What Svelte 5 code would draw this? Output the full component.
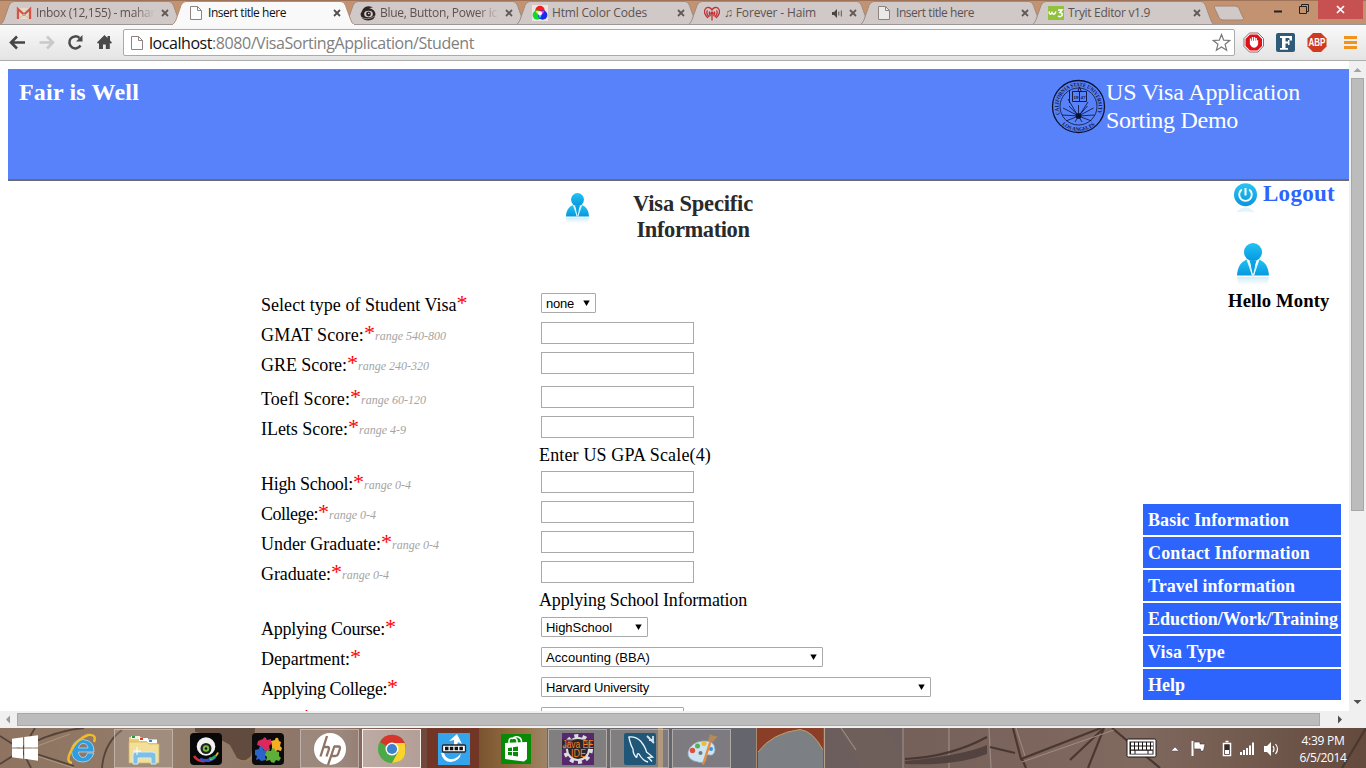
<script>
  const tabs = [
    { icon: 'mail', title: 'Inbox (12,155) - mahar', w: 119, fade: true },
    { icon: 'page', title: 'Insert title here', w: 78, active: true },
    { icon: 'eye', title: 'Blue, Button, Power ic', w: 117, fade: true },
    { icon: 'rgb', title: 'Html Color Codes', w: 95 },
    { icon: 'radio', title: '♫ Forever - Haim', w: 92, audio: true },
    { icon: 'page', title: 'Insert title here', w: 78 },
    { icon: 'w3', title: 'Tryit Editor v1.9', w: 82 }
  ];
  const rows = [
    { label: 'Select type of Student Visa', w: 195.5, select: 'none', tw: 28, width: 55, h: 29 },
    { label: 'GMAT Score:', w: 103, hint: 'range 540-800', hw: 71, h: 30 },
    { label: 'GRE Score:', w: 86, hint: 'range 240-320', hw: 71, h: 34 },
    { label: 'Toefl Score:', w: 89, hint: 'range 60-120', hw: 65, h: 30 },
    { label: 'ILets Score:', w: 87, hint: 'range 4-9', hw: 47, h: 30 },
    { heading: 'Enter US GPA Scale(4)', w: 172, h: 25 },
    { label: 'High School:', w: 92, hint: 'range 0-4', hw: 47, h: 30 },
    { label: 'College:', w: 57, hint: 'range 0-4', hw: 47, h: 30 },
    { label: 'Under Graduate:', w: 120, hint: 'range 0-4', hw: 47, h: 30 },
    { label: 'Graduate:', w: 70, hint: 'range 0-4', hw: 47, h: 30 },
    { heading: 'Applying School Information', w: 208, h: 26 },
    { label: 'Applying Course:', w: 124, select: 'HighSchool', tw: 66, width: 107, h: 30 },
    { label: 'Department:', w: 89, select: 'Accounting (BBA)', tw: 104, width: 282, h: 30 },
    { label: 'Applying College:', w: 126, select: 'Harvard University', tw: 103, width: 390, h: 30 },
    { label: '', w: 40, select: ' ', tw: 4, width: 143, h: 30 }
  ];
  const menu = [
    ['Basic Information', 141],
    ['Contact Information', 162],
    ['Travel information', 147],
    ['Eduction/Work/Training', 190],
    ['Visa Type', 77],
    ['Help', 37]
  ];
  const tasks = [
    { icon: 'ie' },
    { icon: 'files', open: true },
    { icon: 'cam' },
    { icon: 'puzzle' },
    { icon: 'hp', open: true },
    { icon: 'chrome', open: true, front: true },
    { icon: 'pass' },
    { icon: 'store' },
    { icon: 'java', open: true },
    { icon: 'mysql', open: true },
    { icon: 'paint', open: true }
  ];

  // Spreads the letters so that a line takes the given width.
  function fit(node, width) {
    const apply = () => {
      const count = node.textContent.length;
      if (!count) {
        node.style.width = width + 'px';
        return;
      }
      node.style.letterSpacing = '0px';
      const natural = node.getBoundingClientRect().width;
      node.style.letterSpacing = (width - natural) / count + 'px';
    };
    apply();
    document.fonts?.ready.then(apply);
  }
</script>

{#snippet page()}
  <path d="M2.500 1.500h7l4 4v9h-11z" fill="#fff" fill-opacity=".6" stroke="#8d8481" /><path d="M9.500 1.500v4h4" fill="none" stroke="#8d8481" />
{/snippet}

{#snippet person(size)}
  <svg width={size} height={size * 1.32} viewBox="0 0 32 42">
    <defs>
      <linearGradient id="pg" x1="0" y1="0" x2="0" y2="1"><stop offset="0" stop-color="#22c3f3" /><stop offset="1" stop-color="#0597de" /></linearGradient>
      <linearGradient id="pr" x1="0" y1="0" x2="0" y2="1"><stop offset="0" stop-color="#c9eaf9" /><stop offset="1" stop-color="#fff" /></linearGradient>
    </defs>
    <circle cx="16" cy="9" r="9" fill="url(#pg)" />
    <path d="M0 32.500C.5 24 4 18.500 10 16.500l6 14.500 6-14.500c6 2 9.500 7.500 10 16z" fill="url(#pg)" />
    <path d="M12.500 17.500h7l-1.500 5 1 4.500-3 6-3-6 1-4.500z" fill="#0aa2e4" />
    <path d="M10.200 17l5.300 15.500L13.200 22M21.800 17l-5.300 15.500L18.800 22" fill="none" stroke="#fff" stroke-width=".9" />
    <path d="M0 34h14l2-1 2 1h14l-1.500 8h-29z" fill="url(#pr)" />
  </svg>
{/snippet}

<div class="window">
  <div class="strip">
    <div class="tabs">
      {#each tabs as t}
        <div class="tab" class:active={t.active}>
          <svg class="shape" width="184" height="25" viewBox="0 0 184 25">
            <path d="M-1 24.500C2 23.500 3 20 4 17L8 5.500Q9.500 1.500 13 1.500H168Q171 1.500 172.500 5.500L177 18Q179 24 181 24.500z" fill={t.active ? '#f9f9f9' : '#d0c9c7'} stroke={t.active ? '#b58e74' : '#a08b80'} />
            {#if !t.active}<path d="M0 24.500H182" stroke="#9c9797" />{:else}<path d="M0 24.500H181" stroke="#f9f9f9" />{/if}
          </svg>
          <svg class="fav" width="16" height="16" viewBox="0 0 16 16">
            {#if t.icon === 'mail'}
              <path d="M1 3h14v11H1z" fill="#e6d8cb" /><path d="M2 14V4l6 5.500L14 4v10" fill="none" stroke="#d55345" stroke-width="2.300" /><path d="M4 13l4-4 4 4" fill="none" stroke="#c8b8a9" />
            {:else if t.icon === 'page'}
              {@render page()}
            {:else if t.icon === 'eye'}
              <path d="M3 4Q6-.5 13 2.500L9 3q6 1.500 6.500 6Q15 15.500 8 15.500 1 15 .5 9z" fill="#2c2421" /><path d="M1 12q6 4 14-1" fill="none" stroke="#d0c9c7" stroke-width=".6" /><ellipse cx="8.500" cy="9" rx="4.300" ry="3.200" fill="#d8cfcc" /><circle cx="8.500" cy="9" r="2.400" fill="#2c2421" /><circle cx="8.800" cy="8.500" r=".8" fill="#ddd" />
            {:else if t.icon === 'rgb'}
              <path d="M0 0h16v16H0z" fill="#efe5df" /><circle cx="8" cy="5.500" r="4.700" fill="#f31c22" /><circle cx="5.300" cy="10" r="4.700" fill="#13d831" /><circle cx="10.700" cy="10" r="4.700" fill="#1c2be8" /><path d="M3.700 6Q5 5.200 8 6.500L6 9.300Q4 8 3.700 6z" fill="#fbe82a" /><path d="M12.300 6Q10 5.200 8 6.500l2 2.800Q12 8 12.300 6z" fill="#f233e2" /><path d="M8 13.300Q6.300 11 6.500 9.300h3Q9.700 11 8 13.300z" fill="#22d6ee" /><circle cx="8" cy="8.300" r="2.100" fill="#fff" />
            {:else if t.icon === 'radio'}
              <g fill="none" stroke="#c13237" stroke-width="1.300"><path d="M8 15.500V10M4 13Q-1 8 1 4.500C3 1 7 2.500 8 5c1-2.500 5-4 7-.5Q17 8 12 13" /><path d="M5.300 12Q1.500 8 3.500 5.300M10.700 12Q14.500 8 12.500 5.300M6.500 11Q4.500 8.500 5.800 6.500M9.500 11Q11.500 8.500 10.200 6.500" /></g><circle cx="8" cy="8.300" r="1.700" fill="#c13237" />
            {:else}
              <path d="M0 1h16v14H0z" fill="#91c13d" /><path d="M1 6.500q1 5 3 1 2 4 4-1M10 5h4l-2.200 2.500Q15 8 14 10.500q-2 2-4 .5" fill="none" stroke="#fff" stroke-width="1.500" />
            {/if}
          </svg>
          <span class="ttl" class:fade={t.fade}><span class="ib" use:fit={t.w}>{t.title}</span></span>
          {#if t.audio}
            <svg class="audio" width="11" height="9" viewBox="0 0 11 9"><path d="M0 3h2l3-3v9L2 6H0z" fill="#4c4443" /><path d="M6.800 2.500v4M9.300 1.500v6" stroke="#5b5452" fill="none" /></svg>
          {/if}
          <svg class="close" width="8" height="8" viewBox="0 0 8 8"><path d="M1 1l6 6M7 1L1 7" stroke={t.active ? '#50504f' : '#615957'} stroke-width="1.800" /></svg>
        </div>
      {/each}
      <svg class="newtab" width="34" height="17" viewBox="0 0 34 17"><path d="M3.500 1H23q3 0 4 2.500l4.500 10q.5 1.500-2 1.500H11Q8 15 7 12.500L2.500 3Q2 1 3.500 1z" fill="#d0c9c7" stroke="#9f8474" /></svg>
    </div>
    <div class="controls">
      <svg width="44" height="20" viewBox="0 0 44 20"><path d="M0 11.500h8" stroke="#222" stroke-width="2" /><path d="M25.500 6.500h7v7h-7zM27.500 6.500v-2h7v7h-2" fill="none" stroke="#28211e" /></svg>
      <div class="quit"><svg width="9" height="9" viewBox="0 0 9 9"><path d="M1 1l7 7M8 1L1 8" stroke="#fff" stroke-width="1.700" /></svg></div>
    </div>
  </div>

  <div class="toolbar">
    <svg class="nav" width="115" height="26" viewBox="0 0 115 26">
      <path d="M10.500 13.500H25M17 7.500l-6 6 6 6" fill="none" stroke="#464646" stroke-width="2.600" />
      <path d="M39.500 13.500H53M47 7.500l6 6-6 6" fill="none" stroke="#c9c9c9" stroke-width="2.600" />
      <path d="M80.500 16.500a6 6 0 1 1-1-7.500" fill="none" stroke="#4b4b4b" stroke-width="2.500" /><path d="M82.500 6v6.500H76z" fill="#4b4b4b" />
      <path d="M97 13.500l7.500-7.500 3 3V7h2.500v4.500l2 2-1.200 1.200-1-.8V20h-4v-4.500h-2.800V20h-4v-6.100l-1 .8z" fill="#4a4a4a" />
    </svg>
    <div class="url">
      <svg width="16" height="16" viewBox="0 0 16 16">{@render page()}</svg>
      <span class="addr"><span class="ib" use:fit={325}><b>localhost</b>:8080/VisaSortingApplication/Student</span></span>
      <svg class="star" width="19" height="19" viewBox="0 0 19 19"><path d="M9.500 1.500l2.200 5.600 6 .4-4.600 3.800 1.500 5.900-5.100-3.300-5.100 3.300 1.500-5.900L1.300 7.500l6-.4z" fill="#fff" stroke="#777" stroke-width="1.200" /></svg>
    </div>
    <svg class="ext" width="131" height="26" viewBox="0 0 131 26">
      <path d="M14.500 4h8.500l5.500 5.500v7.500L23 23h-8.500L9 17.500v-8z" fill="#fff" stroke="#8c6b6b" />
      <path d="M15 5.500h7.500l4.500 4.500v7l-4.500 4.500H15L10.500 17v-7z" fill="#dc111a" /><path d="M15.500 13V9.500M17.500 12V8M19.500 12V8M21.200 12V9M15.500 12.500h6L22.500 12v3q-1 3-3.500 3-2.500-.5-3.500-3z" stroke="#fff" stroke-width="1.300" fill="#fff" />
      <rect x="41" y="4" width="19" height="19" rx="2" fill="#2f5b78" /><path d="M45 7h12v4.500h-2L54 9h-3.500v3.500H53v-1.500h1.500v5H53V14.500h-2.500V19H53v1.800h-8V19h2V9h-2z" fill="#fff" />
      <path d="M78 4h8l5.500 5.500v8L86 23h-8l-5.500-5.500v-8z" fill="#d03a1e" /><text x="82" y="17" text-anchor="middle" textLength="17" lengthAdjust="spacingAndGlyphs" font-size="10" font-weight="700" fill="#fff" font-family="Liberation Sans, sans-serif">ABP</text>
      <path d="M109 8.500h13M109 13.500h13M109 18.500h13" stroke="#f2941b" stroke-width="2.800" />
    </svg>
  </div>

  <div class="browser">
    <div class="page">
      <header>
        <div class="site"><span class="ib" use:fit={120}>Fair is Well</span></div>
        <div class="brand">
          <svg width="55" height="55" viewBox="0 0 55 55">
            <g fill="none" stroke="#0b1231">
              <circle cx="27.500" cy="27.500" r="26" stroke-width="1.300" /><circle cx="27.500" cy="27.500" r="18.500" stroke-width=".8" />
              <path d="M27.500 38V26M27.500 37L18 27M27.500 37l9-10M27.500 37L12 29M27.500 37l15-8M27.500 37L11 36M27.500 37l16-1M27.500 37L15 42M27.500 37l13 5M24 43l3.500-6 3.500 6M17 20l10 17M37 23L28 37" stroke-width=".8" />
              <path d="M21.500 12.500h14v10h-14zM28.500 13v9M27 12l1.500-4 1.500 4M18.500 11v13" fill="#5882fa" stroke-width=".9" />
              <circle cx="27.500" cy="37" r="2.500" fill="#0b1231" />
              <path id="sealTop" d="M9 35A20 20 0 1 1 46 35" stroke="none" /><path id="sealLow" d="M10.800 45.400A24.500 24.500 0 0 0 44.200 45.400" stroke="none" />
            </g>
            <g fill="#0b1231" font-family="Liberation Serif, serif" font-weight="700" font-size="5.600">
              <text textLength="77" lengthAdjust="spacingAndGlyphs"><textPath href="#sealTop" textLength="77" lengthAdjust="spacingAndGlyphs">CALIFORNIA STATE UNIVERSITY</textPath></text>
              <text font-size="5.200"><textPath href="#sealLow">LOS ANGELES</textPath></text>
              <text x="22.600" y="19.500" font-size="5">19</text><text x="29.500" y="19.500" font-size="5">47</text>
            </g>
          </svg>
          <div><span class="ib" use:fit={194}>US Visa Application</span><br /><span class="ib" use:fit={132}>Sorting Demo</span></div>
        </div>
      </header>
      <div class="body">
        <main>
          <div class="heading">
            {@render person(23)}
            <h2><span class="ib" use:fit={120}>Visa Specific</span><br /><span class="ib" use:fit={113}>Information</span></h2>
          </div>
          {#each rows as r}
            <div class="row" class:sel={r.select} class:head={r.heading} style:height="{r.h}px">
              {#if r.heading}
                <div class="label"></div><div class="ib" use:fit={r.w}>{r.heading}</div>
              {:else}
                <div class="label"><span class="ib" use:fit={r.w}>{r.label}</span><span class="req">*</span>{#if r.hint}<i class="ib" use:fit={r.hw}>{r.hint}</i>{/if}</div>
                {#if r.select}
                  <div class="select" style:width="{r.width}px"><span class="ib" use:fit={r.tw}>{r.select}</span><svg width="7" height="7" viewBox="0 0 7 7"><path d="M.3 .5h6.400L3.500 6z" /></svg></div>
                {:else}
                  <input type="text" />
                {/if}
              {/if}
            </div>
          {/each}
        </main>
        <aside>
          <div class="logout">
            <svg width="24" height="32" viewBox="0 0 24 32">
              <defs><linearGradient id="pw" x1="0" y1="0" x2="0" y2="1"><stop offset="0" stop-color="#2bc5f2" /><stop offset="1" stop-color="#0795dc" /></linearGradient></defs>
              <circle cx="12.500" cy="11.700" r="11.500" fill="url(#pw)" /><path d="M8.800 6.500a6.300 6.300 0 1 0 7.400 0" fill="none" stroke="#fff" stroke-width="1.900" /><path d="M12.500 5v7.500" stroke="#fff" stroke-width="2" />
              <path d="M3 29.500Q12.500 19 22 29.500 12.500 27.500 3 29.500z" fill="#e0f4fc" />
            </svg>
            <span class="ib" use:fit={72}>Logout</span>
          </div>
          <div class="who">{@render person(32)}</div>
          <h3><span class="ib" use:fit={101.5}>Hello Monty</span></h3>
          <nav>
            {#each menu as [text, w]}<div><span class="ib" use:fit={w}>{text}</span></div>{/each}
          </nav>
        </aside>
      </div>
    </div>
    <div class="vbar">
      <svg width="17" height="17" viewBox="0 0 17 17"><path d="M4.500 11h8l-4-4z" fill="#a3a3a3" /></svg>
      <div class="vthumb"></div>
      <svg class="down" width="17" height="17" viewBox="0 0 17 17"><path d="M4.500 7h8l-4 4z" fill="#505050" /></svg>
    </div>
  </div>
  <div class="hbar">
    <svg width="17" height="17" viewBox="0 0 17 17"><path d="M10 4.500v8l-4-4z" fill="#9a9a9a" /></svg>
    <div class="hthumb"></div>
    <svg class="right" width="17" height="17" viewBox="0 0 17 17"><path d="M7 4.500v8l4-4z" fill="#505050" /></svg>
  </div>

  <div class="taskbar">
    <svg class="wall" width="1366" height="40" viewBox="0 0 1366 40">
      <defs>
        <linearGradient id="wb"><stop offset="0" stop-color="#8d7360" /><stop offset=".12" stop-color="#947d6b" /><stop offset=".25" stop-color="#8c7468" /><stop offset=".31" stop-color="#70493b" /></linearGradient>
        <linearGradient id="wg"><stop offset="0" stop-color="#7a5430" /><stop offset=".6" stop-color="#947043" /><stop offset="1" stop-color="#9d8468" /></linearGradient>
        <linearGradient id="wr"><stop offset="0" stop-color="#75605a" /><stop offset=".5" stop-color="#80695f" /><stop offset="1" stop-color="#644a3d" /></linearGradient>
      </defs>
      <path d="M0 0h1366v40H0z" fill="url(#wb)" />
      <path d="M0 8l22 14L35 0M22 22L0 36M24 22l50 16M22 22l9 18M34 14Q60 2 84 0M102 40q2-25 20-38" fill="none" stroke="#54433a" stroke-width="1.800" />
      <path d="M24 24l50 16M32 20l38-14" stroke="#ab9582" fill="none" />
      <path d="M195 0h61l-5 28q-8 8-14 2l-7-13q-15-10-35-13z" fill="#614a3e" /><path d="M256 0l-3 27q-6 10-16 4" fill="none" stroke="#a07b54" stroke-width="1.500" />
      <path d="M427 0h52v40h-52z" fill="#713625" /><path d="M479 0h68v40h-68z" fill="url(#wg)" /><path d="M547 0h210v40H547z" fill="#6a686c" />
      <path d="M658 0h5v40h-5z" fill="#a88c68" /><path d="M663 0h94v40h-94z" fill="#64656d" />
      <path d="M757 0h66v40h-66z" fill="#8a3d27" /><path d="M758 40V24Q772 5 800 1.500 813 3 823 22v18z" fill="#7c8085" /><path d="M758 24Q772 5 800 1.500 813 3 823 22" fill="none" stroke="#bea064" />
      <path d="M756.500 0v40M841.500 0v40" stroke="#a78b73" /><path d="M823 0h80v40h-80z" fill="#6b5e5d" /><path d="M824.500 0v40" stroke="#b3a08e" /><path d="M842 0h43l20 32v8h-45L842 8z" fill="#6e5f5b" /><path d="M903 0h463v40H903z" fill="url(#wr)" />
      <path d="M841 0l15 22M903 0v40M949 0v40M989 0l2 40" fill="none" stroke="#998883" stroke-width="1.300" />
      <path d="M905 31q45-2 82-22M990 19l25 6M1013 0l8 31 80-31M1022 31l4 9M1104 0l-16 40M1112 0l48 40M1104 0l-34 32M1366 0l-24 40" fill="none" stroke="#4a3830" stroke-width="2.200" />
      <path d="M905 33q60-6 82-16v9q-30 12-82 10z" fill="#524340" />
      <path d="M1022 34l92-32M1016 0l9 28" fill="none" stroke="#a38b7f" />
    </svg>
    <div class="start"><svg width="26" height="26" viewBox="0 0 26 26"><path d="M0 3.700l11-1.500v10.200H0zM12.200 2L26 .2v12.200H12.200zM0 13.500h11v10.200L0 22.200zM12.200 13.500H26v12.200l-13.800-2z" fill="#fff" /></svg></div>
    {#each tasks as t}
      <div class="task" class:open={t.open} class:front={t.front}>
        <svg width="32" height="32" viewBox="0 0 32 32">
          {#if t.icon === 'ie'}
            <path fill-rule="evenodd" d="M28 20q-3 9-11.500 9Q6 28.500 5.500 18 6 7 17 6.500q11.500 1 11 12.500H12.500q.5 5.500 5 5.500 3 0 4-4.500zM12.500 15H22q-.5-4.500-4.700-4.500T12.500 15z" fill="#2f9de0" stroke="#a9ddf7" stroke-width=".8" /><path d="M6 30q-6-1-2-10Q10 6 22 2q9-1 6 7" fill="none" stroke="#f2bc28" stroke-width="2.400" />
          {:else if t.icon === 'files'}
            <path d="M1 4h12l2 2h14v24H1z" fill="#e8cd72" /><path d="M3 3h9v3H3z" fill="#f8f1dc" /><path d="M4 3h3v2H4z" fill="#1d9b42" /><path d="M11 5h9v3h-9z" fill="#fff" /><path d="M12 5h3v2h-3z" fill="#d6412b" /><path d="M19 7h10v3H19z" fill="#fff" /><path d="M21 7h3v2h-3z" fill="#2789d8" /><path d="M1 9h18l2 2h10v19H1z" fill="#f3df97" stroke="#d3b55f" stroke-width=".7" /><path d="M5 31V22q0-3 3-3h16q4 0 4 3v9h-5v-6H10v6z" fill="#7fbfe5" stroke="#d1eefb" /><path d="M9 14v8M5 18h8" stroke="#fff" />
          {:else if t.icon === 'cam'}
            <rect width="32" height="32" rx="4" fill="#080808" /><path d="M4 23q4 6 11 5" stroke="#d82b28" stroke-width="2.500" fill="none" /><path d="M10 26q8 4 15-2" stroke="#3a51cf" stroke-width="3" fill="none" /><path d="M20 26.500q6-2 8-7" stroke="#e3b127" stroke-width="2" fill="none" /><path d="M19 25.500q4 0 7-3" stroke="#1eac55" stroke-width="2" fill="none" /><circle cx="16" cy="13.500" r="9.300" fill="#f2f2f2" /><circle cx="16" cy="15.500" r="5.500" fill="#222" /><circle cx="16" cy="15.500" r="3.200" fill="#79bd43" /><circle cx="16" cy="15.500" r="1.200" fill="#111" />
          {:else if t.icon === 'puzzle'}
            <rect width="32" height="32" rx="4" fill="#0b0b0b" />
            <path d="M6 8l5-2q1-3 3-1l1 2 4-1v5l-2 2 1 4-5 1-2-2-4 1 1-4-3-1z" fill="#dc285d" />
            <path d="M19 8l4-1q0-3 3-2l1 3 2 1-1 4 2 2-1 3-4-1-1 2-4-1V13z" fill="#f3ae26" />
            <path d="M3 17l4-1 1-3 3 1v3l4 1 1 4-3 1 1 4-5 1-2-2-3 1 1-4-2-1z" fill="#2b63cc" />
            <path d="M15 17l4 1 1-3 3 1v2l4 1v4l2 2-2 3-3-1-2 3-3-1-1-2-4 1 1-4-2-2z" fill="#5daf39" />
          {:else if t.icon === 'hp'}
            <circle cx="16" cy="16" r="16" fill="#fff" /><path d="M13 3L6.500 23.500M9.500 14h4q2 0 1.300 2.500L12.500 23.500M20.500 13L14 32M20 13.500h4.500q2 0 1.300 2.500l-1.500 4.500q-.8 2.500-3 2.500H17" fill="none" stroke="#8e7465" stroke-width="2.300" />
          {:else if t.icon === 'chrome'}
            <circle cx="16" cy="16" r="14" fill="#4da947" /><path d="M16 16L4 9A14 14 0 0 1 29 10z" fill="#d8362b" /><path d="M16 10h12.600q4.400 19-12.600 20l6-11z" fill="#fbd32d" /><circle cx="16" cy="16" r="6.500" fill="#fff" /><circle cx="16" cy="16" r="5.100" fill="#3b83cc" />
          {:else if t.icon === 'pass'}
            <rect width="32" height="32" fill="#34a4ec" /><path d="M16 12V7l-5 1 8-7 5 10-4-2-1 3zM3 20q2 9 10 9 9-1 10-9-3 5-8 6-7 1-9-6z" fill="#fff" /><rect x="4.500" y="12" width="23" height="7" rx="1" fill="#fff" stroke="#25262d" stroke-width="1.300" /><path d="M7 15.500h18" stroke="#111" stroke-width="3.500" stroke-dasharray="3.500 1.300" />
          {:else if t.icon === 'store'}
            <path d="M1 1h30v30H1z" fill="#078b07" /><path d="M5 10l22-1v17l-3 2.500L5 26z" fill="#fff" /><path d="M9 11V8q0-3 4-3t4 3v3M12 6q2-3 6-2 4 1 3.500 6" fill="none" stroke="#fff" stroke-width="1.500" /><path d="M8 15l4-.5V18H8zM13 14.300l5-.8V18h-5zM8 19h4v3.500L8 22zM13 19h5v4.500l-5-.8z" fill="#078b07" />
          {:else if t.icon === 'java'}
            <rect width="32" height="32" fill="#55296c" /><circle cx="16" cy="16" r="13" fill="none" stroke="#ddd" stroke-width="4" stroke-dasharray="4 4.170" /><circle cx="16" cy="16" r="11" fill="#29242e" stroke="#ddd" stroke-width="2" /><path d="M0 6.500h32v9.500H0z" fill="#29242e" fill-opacity=".75" />
            <text x=".5" y="15" textLength="31" lengthAdjust="spacingAndGlyphs" font-family="Liberation Sans, sans-serif" font-size="10" fill="#fb801e">Java EE</text><text x="9" y="24" textLength="15" lengthAdjust="spacingAndGlyphs" font-family="Liberation Sans, sans-serif" font-size="10" fill="#fb801e">IDE</text>
          {:else if t.icon === 'mysql'}
            <rect width="32" height="32" rx="2" fill="#205778" /><path d="M4.500 4q1 1 1 3Q7 13 9 16q0 5 3 8 1 1 1-1 0-3 2-2 4 7 9 8M4.500 4q7-1 12 4 5 6 6 11 4 3 6 5-3 0-4.500.5 2 1.500 4 4" fill="none" stroke="#eff6fa" stroke-width="1.300" /><path d="M23 3l3 3M25 5l5 5M29 3v4h-4" stroke="#d8e2e8" stroke-width="1.800" fill="none" />
          {:else}
            <path d="M2 19Q5 9 17 8q12-1 12 9-1 6-5 5-5-1-4 4-1 5-8 3-11-2-10-10z" fill="#cfe4f2" stroke="#8aaabd" stroke-width=".7" /><circle cx="6.500" cy="17.500" r="2.700" fill="#e44e39" /><circle cx="11.500" cy="13" r="2.500" fill="#57b34c" /><circle cx="18" cy="10.500" r="2.500" fill="#f0bc32" /><circle cx="14.500" cy="20" r="2" fill="#677d86" /><circle cx="25" cy="16" r="2" fill="#3b92d8" /><path d="M16 31l7-22 2.500.5L18 32z" fill="#e58d3d" /><path d="M22 8l2-7q4 3 8 2l-5 6z" fill="#b48a5c" />
          {/if}
        </svg>
      </div>
    {/each}
    <svg class="tray" width="156" height="40" viewBox="0 0 156 40">
      <rect x="1" y="11" width="29" height="18" rx="1.500" fill="#fff" stroke="#1c1614" /><path d="M3.500 13.500h24v13h-24z" fill="#1c1614" /><g stroke="#fff" fill="none" stroke-width="3"><path d="M5 16h22M5 20h22" stroke-dasharray="3 1" /><path d="M5 24.300h3.500M9.500 24.300h12M22.500 24.300H26.500" /></g>
      <path d="M45 23l4-4 4 4z" fill="#fff" stroke="#554a4a" stroke-width=".5" />
      <path d="M66.500 13v15" stroke="#fff" stroke-width="2" /><path d="M68 14h6v2h5l-1.500 7h-3v-2H68z" fill="#fff" stroke="#463834" stroke-width=".6" />
      <path d="M97.500 15.500h7v12h-7zM99.500 13.500h3" fill="#332a28" stroke="#fff" stroke-width="1.500" /><path d="M99 22h4v4h-4z" fill="#fff" />
      <path d="M115 27v-3M118 27v-5M121 27v-7M124 27v-9.500M127 27V14.500" stroke="#fff" stroke-width="2" />
      <path d="M138 18h3l4-4v14l-4-4h-3z" fill="#fff" /><path d="M147 18q2 3 0 6M149.500 16q4 5 0 10" fill="none" stroke="#fff" stroke-width="1.200" />
    </svg>
    <div class="clock"><span class="ib" use:fit={43}>4:39 PM</span><br /><span class="ib" use:fit={47}>6/5/2014</span></div>
  </div>
</div>

<style>
  :global(body) { margin: 0; overflow: hidden; }
  .window { width: 1366px; height: 768px; display: flex; flex-direction: column; overflow: hidden; background: #fff; font-family: 'Liberation Serif', serif; color: #000; }
  .window * { box-sizing: border-box; }
  svg { display: block; flex: none; }
  .ib { display: inline-block; white-space: nowrap; }
  .strip { height: 25px; flex: none; background: #c39270; box-shadow: inset 0 1px #9e7358, inset 0 -1px #9c9797; display: flex; justify-content: space-between; }
  .tabs { display: flex; padding-left: 1px; font: 12px/24px 'Open Sans', sans-serif; color: #5d5250; }
  .tab { position: relative; width: 172px; height: 25px; display: flex; padding-left: 15px; z-index: 1; }
  .tab.active { z-index: 2; color: #111; }
  .shape { position: absolute; left: 0; top: 0; z-index: -1; }
  .fav { margin-top: 5px; }
  .ttl { margin-left: 4px; width: 119px; padding-top: 1px; overflow: hidden; white-space: nowrap; }
  .ttl.fade { -webkit-mask-image: linear-gradient(90deg, #000 82%, transparent); mask-image: linear-gradient(90deg, #000 82%, transparent); }
  .audio { position: absolute; left: 143px; top: 9px; }
  .close { margin: 9px 0 0 6px; }
  .newtab { margin: 5px 0 0 7px; }
  .controls { display: flex; padding-right: 3px; }
  .quit { width: 45px; height: 19px; background: #c75050; display: grid; place-items: center; }
  .toolbar { height: 36px; flex: none; background: linear-gradient(#f9f9f9, #e4e4e4); border-bottom: 1px solid #adadad; display: flex; padding-top: 4px; }
  .nav { margin-right: 8px; }
  .url { width: 1112px; height: 27px; border: 1px solid #aaa; border-radius: 2px; background: #fff; display: flex; align-items: center; padding: 0 3px 0 5px; }
  .addr { margin-left: 4px; font: 16px/24px 'Open Sans', sans-serif; color: #808080; }
  .addr b { font-weight: 400; color: #111; }
  .star { margin-left: auto; }
  .browser { height: 650px; flex: none; display: flex; }
  .page { width: 1349px; height: 650px; overflow: hidden; padding: 8px 0 0 8px; }
  header { height: 112px; background: #5882fa; border-bottom: 2px solid #6b6b6f; color: #fff; font-size: 24px; line-height: 28px; padding: 9px 49px 0 11px; display: flex; justify-content: space-between; }
  .site { font-weight: 700; }
  .brand { display: flex; width: 249px; }
  .brand svg { margin-top: 1px; }
  .body { display: flex; }
  main { width: 1135px; padding: 10px 0 0 253px; font-size: 18px; flex: none; }
  .heading { height: 99px; display: flex; padding: 2px 0 0 305px; }
  h2 { margin: -2px 0 0 44px; font-size: 22.5px; line-height: 26px; text-align: center; color: #2a2a2a; }
  .row { display: flex; line-height: 32px; }
  .row.sel { line-height: 30px; }
  .row.head { line-height: 24px; }
  .label { width: 280px; white-space: nowrap; }
  .head .label { width: 278px; }
  .req { color: #f00; font-size: 22px; line-height: 0; position: relative; top: -1px; }
  i { font-size: 12px; color: #a4a4a4; line-height: 0; position: relative; top: -1px; }
  input { width: 153px; height: 22px; margin: 3px 0 0; border: 1px solid #a9a9a9; padding: 1px; outline: 0; background: #fff; }
  .select { height: 20px; margin-top: 3px; border: 1px solid #a9a9a9; border-radius: 1px; display: flex; justify-content: space-between; padding: 0 5px 0 4px; font: 13px/19px 'Liberation Sans', sans-serif; }
  .select svg { margin-top: 6px; }
  aside { width: 198px; display: flex; flex-direction: column; }
  .logout { display: flex; height: 61px; padding-left: 90px; color: #2e64fe; font: bold 23px/26px 'Liberation Serif', serif; }
  .logout svg { margin: 2px 6px 0 0; }
  .who { height: 47px; padding: 1px 0 0 94px; }
  h3 { margin: 0 0 193px; padding-left: 85px; font-size: 18.72px; line-height: 24px; height: 22px; }
  nav { display: grid; gap: 2px; }
  nav div { height: 31px; background: #2e64fe; color: #fff; font-weight: 700; font-size: 18px; line-height: 33px; padding-left: 5px; }
  .vbar { width: 17px; height: 650px; background: #f0f0f0; }
  .vthumb { width: 13px; height: 433px; margin-left: 2px; background: #bcbcbc; border: 1px solid #a8a8a8; }
  .down { margin-top: 182px; }
  .hbar { height: 17px; flex: none; background: #f0f0f0; display: flex; }
  .hthumb { width: 1303px; height: 13px; margin-top: 2px; background: #bcbcbc; border: 1px solid #a8a8a8; }
  .right { margin-left: 11px; }
  .taskbar { height: 40px; flex: none; position: relative; display: flex; color: #fff; background: #806c60; }
  .wall { position: absolute; inset: 0; }
  .start { width: 52px; padding: 7px 0 0 12px; position: relative; }
  .task { position: relative; width: 59px; height: 39px; margin: 1px 3px 0 0; display: grid; place-items: center; border: 1px solid transparent; }
  .task.open { background: rgba(200, 190, 185, .25); border-color: rgba(225, 215, 210, .5); }
  .task.front { background: rgba(225, 215, 212, .6); border-color: #f5eeea; }
  .tray { position: relative; margin-left: 392px; }
  .clock { position: relative; width: 82px; text-align: center; font: 12px/17px 'Open Sans', sans-serif; padding-top: 4px; }
</style>
